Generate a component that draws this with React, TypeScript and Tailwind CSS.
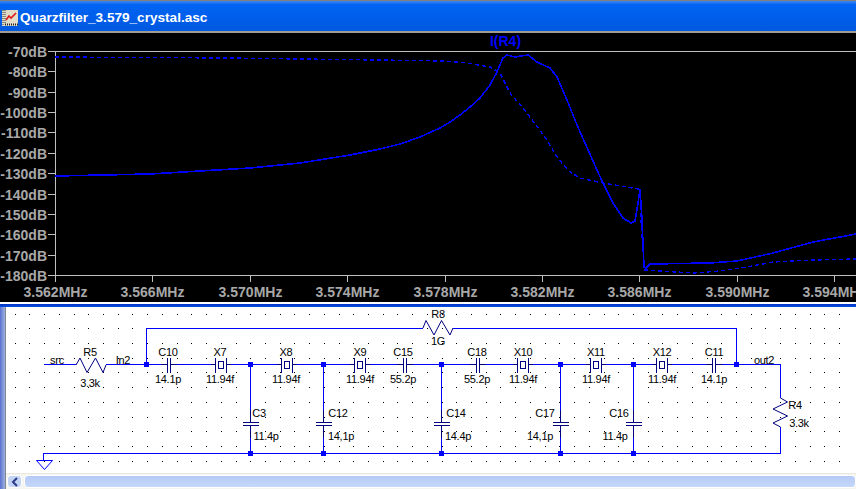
import * as React from "react";

const solid =
  "55,176 150,174 200,171 250,168 300,163 350,155 380,149 400,144 420,137 440,128 450,122 460,115 470,107 480,98 490,85 497,72 503,58 507,55 515,57 528,55 537,62 550,68 557,77 567,100 577,125 597,170 603,183 613,203 623,218 631,223 635,221 638,203 640,189 642,220 644,267 646,268 650,264 710,263 737,261 773,253 813,242 856,234";
const dashed =
  "55,57 230,58 300,59 380,60 443,61 467,63 490,67 500,73 510,93 527,113 547,140 557,157 567,169 570,172 580,178 603,183 638,189 640,190 641,220 643,253 645,270 660,271 693,273 720,271 747,267 773,262 813,260 856,259";

const dbLabels = [-70, -80, -90, -100, -110, -120, -130, -140, -150, -160, -170, -180];
const freqLabels = ["3.562", "3.566", "3.570", "3.574", "3.578", "3.582", "3.586", "3.590", "3.594"];

const GRID = 14.72;
const dotRows = Array.from({ length: 12 }, (_, i) => 460.7 - i * GRID);
const dotCols = Array.from({ length: 58 }, (_, i) => i * GRID);

const topNodes = [146, 250, 323, 441, 560, 633, 736];
const bottomNodes = [250, 323, 441, 560, 633];

const caps = [168.5, 405, 478, 714];
const crystals = [221, 287, 360, 523, 596, 662];

const labels: [string, number, number][] = [
  ["R5", 90, 356],
  ["3.3k", 90, 387],
  ["C10", 168, 356],
  ["14.1p", 168, 383],
  ["X7", 220, 356],
  ["11.94f", 220, 383],
  ["X8", 286, 356],
  ["11.94f", 286, 383],
  ["X9", 360, 356],
  ["11.94f", 360, 383],
  ["C15", 403, 356],
  ["55.2p", 403, 383],
  ["C18", 477, 356],
  ["55.2p", 477, 383],
  ["X10", 523, 356],
  ["11.94f", 523, 383],
  ["X11", 596, 356],
  ["11.94f", 596, 383],
  ["X12", 662, 356],
  ["11.94f", 662, 383],
  ["C11", 714, 356],
  ["14.1p", 714, 383],
  ["R8", 438, 318],
  ["1G", 438, 345],
  ["src", 57, 364],
  ["In2", 123, 364],
  ["out2", 764, 364],
  ["C3", 259, 417],
  ["11.4p", 266, 440],
  ["C12", 338, 417],
  ["14,1p", 341, 440],
  ["C14", 456, 417],
  ["14.4p", 458, 440],
  ["C17", 545, 417],
  ["14,1p", 540, 440],
  ["C16", 619, 417],
  ["11.4p", 615, 440],
  ["R4", 795, 409],
  ["3.3k", 799, 427],
];

function Plot() {
  return (
    <svg width="856" height="269" viewBox="0 33 856 269" className="block bg-black font-['Liberation_Sans',sans-serif]">
      <g shapeRendering="crispEdges">
        <path d="M55 51.5H856M55.5 51V275M55 275.5H856" stroke="#c0c0c0" fill="none" />
      </g>
      {dbLabels.map((db, i) => {
        const y = Math.round(51 + i * 20.36) + 0.5;
        return (
          <g key={db}>
            <path d={`M48 ${y}H55`} stroke="#c0c0c0" shapeRendering="crispEdges" />
            <text x="47" y={y + 5} textAnchor="end" fill="#a8a8a8" fontSize="14" fontWeight="700">
              {db}dB
            </text>
          </g>
        );
      })}
      {freqLabels.map((f, i) => {
        const x = Math.round(55 + i * 97.4) + 0.5;
        return (
          <g key={f}>
            <path d={`M${x} 275V282`} stroke="#c0c0c0" shapeRendering="crispEdges" />
            <text x={x} y="297" textAnchor="middle" fill="#a8a8a8" fontSize="14" fontWeight="700">
              {f}MHz
            </text>
          </g>
        );
      })}
      <text x="505.5" y="46" textAnchor="middle" fill="#0000ff" fontSize="14" fontWeight="700">
        I(R4)
      </text>
      <polyline points={dashed} fill="none" stroke="#0000ff" strokeWidth="1.4" strokeDasharray="4 3" shapeRendering="crispEdges" />
      <polyline points={solid} fill="none" stroke="#0000ff" strokeWidth="1.6" shapeRendering="crispEdges" />
    </svg>
  );
}

function Schematic() {
  return (
    <svg width="850" height="166" viewBox="6 307 850 166" className="block bg-white font-['Liberation_Sans',sans-serif]">
      {dotRows.map((y) =>
        dotCols.map((x) => <rect key={`${x}-${y}`} x={Math.round(x)} y={Math.round(y)} width="1" height="1" fill="#000" />),
      )}

      {/* wires */}
      <g shapeRendering="crispEdges">
        <path
          d="M146.5 364.5V328.5H423M453 328.5H736.5V364.5M43.5 364.5H76M106 364.5H780.5V398M780.5 427V453.5H43.5V460M250.5 364V410M323.5 364V410M441.5 364V410M560.5 364V410M633.5 364V410M250.5 438V453M323.5 438V453M441.5 438V453M560.5 438V453M633.5 438V453"
          stroke="#0000ff"
          strokeWidth="1.4"
          fill="none"
        />
      </g>

      {/* parts */}
      <g stroke="#000080" fill="none">
        <polyline points="76,365 80,358 87,372.5 95.5,358 103,372.5 106,365" />
        <polyline points="423,328 426,320.5 434,335 441.5,320.5 450,335 453,328" />
        <polyline points="780.5,398 787.5,402 773,409 787.5,416 773,423 780.5,427" />
        <path d="M36.5 460.5H52.5L44.5 469.5Z" stroke="#0000ff" />
        {caps.map((x) => (
          <g key={x} shapeRendering="crispEdges">
            <path d={`M${x - 8} 364.5H${x - 2}M${x + 2} 364.5H${x + 8}`} />
            <rect x={x - 1} y="358" width="2" height="15" fill="#fff" stroke="none" />
            <path d={`M${x - 1.5} 358V373M${x + 1.5} 358V373`} />
          </g>
        ))}
        {crystals.map((x) => (
          <g key={x} shapeRendering="crispEdges">
            <rect x={x - 5} y="358" width="10" height="15" fill="#fff" stroke="none" />
            <path d={`M${x - 5.5} 358V373M${x + 5.5} 358V373M${x - 10} 364.5H${x - 6}M${x + 6} 364.5H${x + 10}`} />
            <rect x={x - 2.5} y="361.5" width="5" height="7" />
          </g>
        ))}
        {bottomNodes.map((x) => (
          <path
            key={x}
            shapeRendering="crispEdges"
            d={`M${x + 0.5} 410V422M${x - 7.5} 422.5H${x + 8.5}M${x - 7.5} 425.5H${x + 8.5}M${x + 0.5} 426V438`}
          />
        ))}
      </g>

      {/* junctions */}
      {topNodes.map((x) => (
        <rect key={x} x={x - 2} y="362" width="5" height="5" fill="#0000ff" />
      ))}
      {bottomNodes.map((x) => (
        <rect key={x} x={x - 2} y="451" width="5" height="5" fill="#0000ff" />
      ))}

      {labels.map(([t, x, y]) => (
        <text key={`${t}-${x}-${y}`} x={x} y={y} textAnchor="middle" fontSize="11" letterSpacing="-0.3" fill="#000">
          {t}
        </text>
      ))}
    </svg>
  );
}

export default function App() {
  return (
    <div className="flex h-[489px] w-[856px] flex-col overflow-hidden bg-white font-['Liberation_Sans',sans-serif]">
      {/* title bar */}
      <div className="flex h-[31px] shrink-0 items-center gap-[2px] border-t border-[#808080] bg-gradient-to-b from-[#3a86f0] via-[#0064f4] via-[12%] to-[#0058e0] pl-[2px] pt-[3px]">
        <svg width="16" height="16" viewBox="0 0 16 16" className="shrink-0">
          <rect width="16" height="16" fill="#e0dcc8" />
          <path d="M1 0V16M3 0V14" stroke="#333" strokeWidth="1" strokeDasharray="1 1" />
          <path d="M3 14.5H16" stroke="#222" strokeWidth="2" strokeDasharray="1 1" />
          <path d="M4 10L7 6L9 8L14 3" stroke="#e01818" fill="none" strokeWidth="1.6" />
        </svg>
        <span className="text-[13.6px] font-bold leading-none whitespace-nowrap text-white">Quarzfilter_3.579_crystal.asc</span>
      </div>
      <div className="h-[2px] shrink-0 bg-[#a09c90]" />

      <Plot />

      {/* splitter */}
      <div className="h-[2px] shrink-0 bg-white" />
      <div className="h-[3px] shrink-0 bg-gradient-to-b from-[#0030c8] to-[#0050e0]" />

      <div className="flex min-h-0 flex-1">
        <div className="w-[6px] shrink-0 border-r border-[#808890] bg-gradient-to-r from-[#5a70d0] to-[#a0b0e0]" />
        <div className="flex min-w-0 flex-1 flex-col">
          <Schematic />
          {/* scrollbar */}
          <div className="flex flex-1 items-stretch gap-[2px] border-t border-[#e8e8e0] bg-[#f4f4f0] pt-[1px] pb-[1px] pl-px">
            <div className="flex w-[15px] shrink-0 items-center justify-center rounded-sm border border-white bg-[#c4d4f4] text-[#2c3c88]">
              <svg width="8" height="10" viewBox="0 0 8 10">
                <path d="M6 1L2 5L6 9" stroke="currentColor" strokeWidth="2" fill="none" />
              </svg>
            </div>
            <div className="flex-1 rounded-sm border border-white bg-gradient-to-b from-[#b4caf6] to-[#c6d8fa]" />
          </div>
        </div>
      </div>
    </div>
  );
}
